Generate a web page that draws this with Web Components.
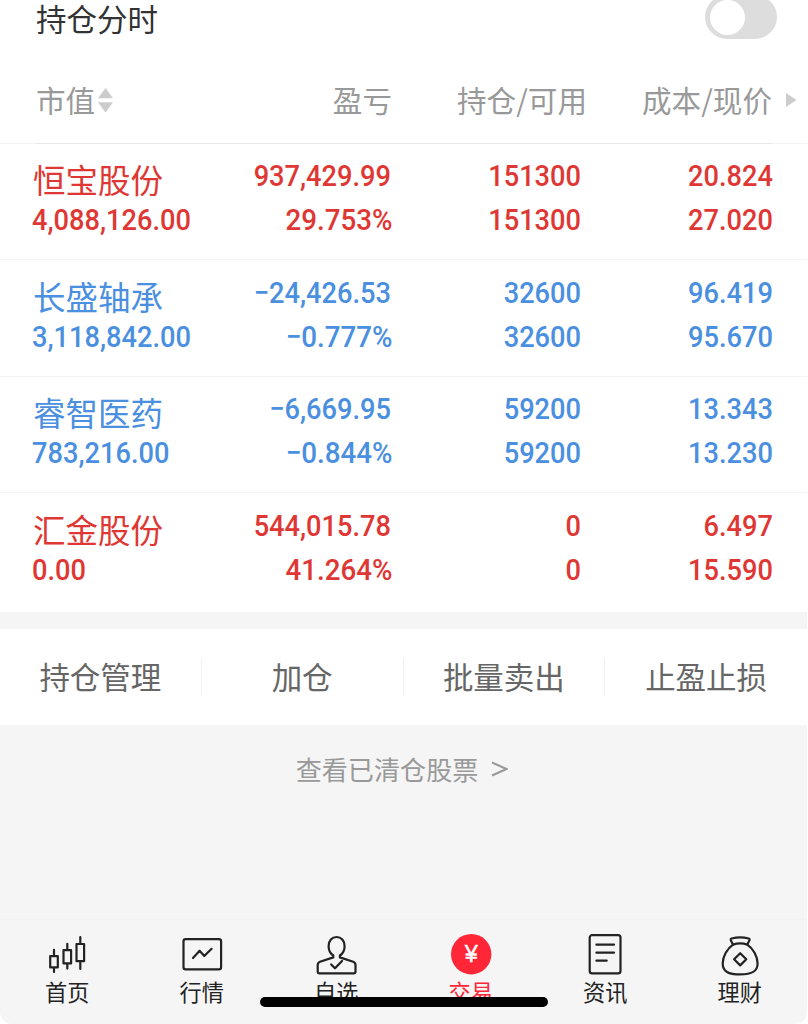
<!DOCTYPE html>
<html lang="zh-CN">
<head>
<meta charset="utf-8">
<title>持仓</title>
<style>
  html, body {
    margin: 0;
    background: #fff;
    overflow: hidden;
  }
  body {
    font-family: "Noto Sans CJK SC", sans-serif;
    color: #333;
  }
</style>
</head>
<body>
<trade-page>
  <toggle-row label="持仓分时"></toggle-row>
  <holdings-head></holdings-head>
  <holding-row trend="up" name="恒宝股份" value="4,088,126.00" profit="937,429.99" rate="29.753%" held="151300" usable="151300" cost="20.824" price="27.020"></holding-row>
  <holding-row trend="down" name="长盛轴承" value="3,118,842.00" profit="−24,426.53" rate="−0.777%" held="32600" usable="32600" cost="96.419" price="95.670"></holding-row>
  <holding-row trend="down" name="睿智医药" value="783,216.00" profit="−6,669.95" rate="−0.844%" held="59200" usable="59200" cost="13.343" price="13.230"></holding-row>
  <holding-row trend="up" name="汇金股份" value="0.00" profit="544,015.78" rate="41.264%" held="0" usable="0" cost="6.497" price="15.590"></holding-row>
  <action-bar>
    <span>持仓管理</span>
    <span>加仓</span>
    <span>批量卖出</span>
    <span>止盈止损</span>
  </action-bar>
  <cleared-link>查看已清仓股票</cleared-link>
  <tab-bar slot="footer">
    <tab-item icon="home">首页</tab-item>
    <tab-item icon="quotes">行情</tab-item>
    <tab-item icon="watch">自选</tab-item>
    <tab-item icon="trade" active>交易</tab-item>
    <tab-item icon="news">资讯</tab-item>
    <tab-item icon="wealth">理财</tab-item>
  </tab-bar>
</trade-page>

<script>
class TradePage extends HTMLElement {
  constructor() {
    super();
    this.attachShadow({ mode: "open" });
    this.shadowRoot.innerHTML = `
      <style>
        :host {
          display: flex;
          flex-direction: column;
          width: 807px;
          height: 1024px;
          background: #f5f5f5;
          border-radius: 0 0 12px 12px;
        }
        main { flex: 1; }
      </style>
      <main><slot></slot></main>
      <slot name="footer"></slot>
    `;
  }
}

class ToggleRow extends HTMLElement {
  constructor() {
    super();
    this.attachShadow({ mode: "open" });
    this.shadowRoot.innerHTML = `
      <style>
        :host {
          display: flex;
          justify-content: space-between;
          align-items: flex-start;
          height: 59.5px;
          padding: 0 30px 0 36px;
          box-sizing: border-box;
          background: #fff;
        }
        .label {
          font-size: 30.5px;
          line-height: 37px;
          color: #333;
        }
        .switch {
          width: 72px;
          height: 44px;
          margin-top: -5px;
          padding: 4.5px;
          box-sizing: border-box;
          border-radius: 22px;
          background: #ddd;
        }
        .knob {
          width: 35px;
          height: 35px;
          border-radius: 50%;
          background: #fff;
        }
      </style>
      <span class="label">${this.getAttribute("label")}</span>
      <div class="switch"><div class="knob"></div></div>
    `;
  }
}

class HoldingsHead extends HTMLElement {
  constructor() {
    super();
    this.attachShadow({ mode: "open" });
    this.shadowRoot.innerHTML = `
      <style>
        :host {
          display: block;
          background: #fff;
          color: #999;
          font-size: 29.6px;
        }
        .cols {
          display: grid;
          grid-template-columns: 156px 200px 195px 185px 25px;
          align-items: center;
          height: 83px;
          padding-left: 36px;
        }
        .cols > span { text-align: right; line-height: 80px; margin-top: -2px; }
        .cols > .sort {
          display: flex;
          align-items: center;
          gap: 2.5px;
        }
        svg { display: block; fill: #ccc; }
        .sort svg { margin-top: 1px; }
        .more { justify-self: end; margin-top: -2px; }
        .rule {
          height: 1px;
          background: linear-gradient(90deg, #f4f4f4 36px, #e6e6e6 36px 772px, #f4f4f4 772px);
        }
      </style>
      <div class="cols">
        <span class="sort">市值<svg width="15" height="25" viewBox="0 0 15 25"><path d="M7.5 0L15 10.3H0zM7.5 24.5L0 14.2h15z"/></svg></span>
        <span>盈亏</span>
        <span>持仓/可用</span>
        <span>成本/现价</span>
        <svg class="more" width="11" height="14" viewBox="0 0 11 14"><path d="M0 0l10.5 7L0 14z"/></svg>
      </div>
      <div class="rule"></div>
    `;
  }
}

class HoldingRow extends HTMLElement {
  constructor() {
    super();
    this.attachShadow({ mode: "open" });
    const get = (key) => this.getAttribute(key);
    this.shadowRoot.innerHTML = `
      <style>
        :host {
          display: grid;
          grid-template-columns: 160px 199px 190px 192px;
          height: 116.5px;
          padding: 10.5px 0 0 32px;
          box-sizing: border-box;
          background: #fff;
          border-bottom: 1px solid #f4f4f4;
          color: #4a8fe0;
        }
        :host([trend="up"]) { color: #de3734; }
        :host(:last-of-type) { height: 118.5px; border-bottom: 0; }
        .name {
          padding-left: 1px;
          font-size: 32.5px;
          line-height: 49px;
          white-space: nowrap;
        }
        .num {
          font-family: Roboto, sans-serif;
          font-weight: 500;
          font-size: 30px;
          line-height: 44px;
          white-space: nowrap;
          transform: scaleX(.907);
          transform-origin: right center;
        }
        .value {
          line-height: 34px;
          transform-origin: left center;
        }
        .rate { transform: translateX(1.5px) scaleX(.925); }
        .right { text-align: right; }
      </style>
      <div>
        <div class="name">${get("name")}</div>
        <div class="num value">${get("value")}</div>
      </div>
      <div class="right">
        <div class="num">${get("profit")}</div>
        <div class="num rate">${get("rate")}</div>
      </div>
      <div class="right">
        <div class="num">${get("held")}</div>
        <div class="num">${get("usable")}</div>
      </div>
      <div class="right">
        <div class="num">${get("cost")}</div>
        <div class="num">${get("price")}</div>
      </div>
    `;
  }
}

class ActionBar extends HTMLElement {
  constructor() {
    super();
    this.attachShadow({ mode: "open" });
    this.shadowRoot.innerHTML = `
      <style>
        :host {
          display: grid;
          grid-template-columns: repeat(4, 1fr);
          align-items: center;
          height: 95.5px;
          margin-top: 17.5px;
          background: #fff;
          color: #666;
          font-size: 30.5px;
        }
        ::slotted(span) {
          height: 38px;
          line-height: 37px;
          text-align: center;
          border-right: 1px solid #f0f0f0;
        }
        ::slotted(span:last-child) { border-right: 0; }
      </style>
      <slot></slot>
    `;
  }
}

class ClearedLink extends HTMLElement {
  constructor() {
    super();
    this.attachShadow({ mode: "open" });
    this.shadowRoot.innerHTML = `
      <style>
        :host {
          display: flex;
          justify-content: center;
          align-items: center;
          gap: 13px;
          height: 88px;
          padding-right: 3px;
          color: #999;
          font-size: 26.1px;
        }
        svg { display: block; fill: none; stroke: #999; stroke-width: 2; }
      </style>
      <slot></slot>
      <svg width="17" height="16" viewBox="0 0 17 16"><path d="M1 1.5L15.5 8 1 14.5"/></svg>
    `;
  }
}

class TabBar extends HTMLElement {
  constructor() {
    super();
    this.attachShadow({ mode: "open" });
    this.shadowRoot.innerHTML = `
      <style>
        :host {
          display: grid;
          grid-template-columns: repeat(6, 1fr);
          position: relative;
          height: 105px;
          border-top: 1px solid #f2f2f2;
          box-sizing: border-box;
        }
        /* system home indicator, lies over the labels */
        .indicator {
          position: absolute;
          left: 260px;
          bottom: 17px;
          width: 288px;
          height: 10px;
          border-radius: 5px;
          background: #000;
        }
      </style>
      <slot></slot>
      <div class="indicator"></div>
    `;
  }
}

const ICONS = {
  home: `
    <path d="M5.2 24.2h7.6v11.2H5.2zM9 17.8v6.4M9 35.4V40M18.5 18.2h7.6v13.2h-7.6zM22.3 11.8v6.4M22.3 31.4v5.2M31.5 12h7.6v17.2h-7.6zM35.3 5.2V12M35.3 29.2V37"/>`,
  quotes: `
    <rect x="3.5" y="7.2" width="37.6" height="30.2" rx="2.2"/>
    <path d="M13 26l6.6-7.3 4.7 5.3 7.3-7.2"/>`,
  watch: `
    <path d="M19.3 25.4V23.5C16.3 21.5 14.6 17.6 14.6 14.2C14.6 8.8 18 5 22.6 5S30.6 8.8 30.6 14.2C30.6 17.6 28.9 21.5 25.9 23.5V25.4L39.2 29.8Q41.5 30.7 41.5 33V39.5Q41.5 41.3 39.7 41.3H5.5Q3.7 41.3 3.7 39.5V33Q3.7 30.7 6 29.8Z"/>
    <path d="M17.2 32.4l3.8 3.9 7-7.4"/>`,
  trade: `
    <circle cx="22.2" cy="22.2" r="20.2" fill="#ff2638" stroke="none"/>
    <text x="22.2" y="30.4" text-anchor="middle" font-family="Liberation Sans, sans-serif" font-size="23.5" fill="#fff" stroke="#fff" stroke-width=".5">¥</text>`,
  news: `
    <rect x="6.7" y="3.2" width="30.8" height="38.2" rx="2.4"/>
    <path d="M13.4 12.7H31M13.4 20.7H31M13.4 28.7h10.3"/>`,
  wealth: `
    <path d="M15 12.6L12.8 8.2Q12.3 7 13.6 6.5Q22.2 4.2 30.7 6.5Q32 7 31.5 8.2L29.3 12.6"/>
    <path d="M15 12.6Q22.2 10.2 29.3 12.6C35 16.5 39.6 24 39.6 31.5C39.6 39.5 34 42.4 22.2 42.4S4.7 39.5 4.7 31.5C4.7 24 9.4 16.5 15 12.6Z"/>
    <path d="M22.2 21.2l6.1 6.1-6.1 6.1-6.1-6.1z"/>`
};

class TabItem extends HTMLElement {
  constructor() {
    super();
    this.attachShadow({ mode: "open" });
    this.shadowRoot.innerHTML = `
      <style>
        :host {
          display: flex;
          flex-direction: column;
          align-items: center;
          padding-top: 12px;
          color: #222;
          font-size: 22.2px;
          line-height: 30px;
        }
        :host([active]) { color: #ff2638; }
        svg {
          display: block;
          fill: none;
          stroke: #222;
          stroke-width: 2.2;
          stroke-linejoin: round;
          stroke-linecap: round;
        }
      </style>
      <svg width="44" height="44" viewBox="0 0 44 44">${ICONS[this.getAttribute("icon")]}</svg>
      <slot></slot>
    `;
  }
}

customElements.define("trade-page", TradePage);
customElements.define("toggle-row", ToggleRow);
customElements.define("holdings-head", HoldingsHead);
customElements.define("holding-row", HoldingRow);
customElements.define("action-bar", ActionBar);
customElements.define("cleared-link", ClearedLink);
customElements.define("tab-bar", TabBar);
customElements.define("tab-item", TabItem);
</script>
</body>
</html>
